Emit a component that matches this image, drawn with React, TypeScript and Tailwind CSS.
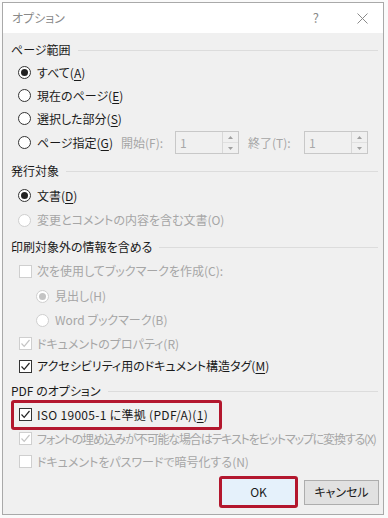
import React from "react";

const U = ({ c }: { c: string }) => <span className="underline underline-offset-2">{c}</span>;

function Radio({ checked, disabled }: { checked?: boolean; disabled?: boolean }) {
  return (
    <span
      className={`flex h-[13px] w-[13px] shrink-0 items-center justify-center rounded-full border bg-white ${
        disabled ? "border-[#cfcfcf]" : "border-[#333]"
      }`}
    >
      {checked && (
        <span className={`h-[7px] w-[7px] rounded-full ${disabled ? "bg-[#c4c4c4]" : "bg-[#222]"}`} />
      )}
    </span>
  );
}

function Check({ checked, disabled }: { checked?: boolean; disabled?: boolean }) {
  return (
    <span
      className={`flex h-[13px] w-[13px] shrink-0 items-center justify-center border bg-white ${
        disabled ? "border-[#cfcfcf]" : "border-[#333]"
      }`}
    >
      {checked && (
        <svg width="11" height="11" viewBox="0 0 11 11">
          <path
            d="M1.5 5.5 L4.2 8.3 L9.5 2"
            fill="none"
            stroke={disabled ? "#c4c4c4" : "#222"}
            strokeWidth="1.2"
          />
        </svg>
      )}
    </span>
  );
}

function Heading({ text }: { text: string }) {
  return (
    <div className="flex h-[22px] items-center pl-[8px] pr-[5px]">
      <span className="text-[#1a1a1a]">{text}</span>
      <span className="ml-[7px] h-px flex-1 bg-[#dcdcdc]" />
    </div>
  );
}

function Spin() {
  return (
    <div className="flex h-[23px] w-[64px] border border-[#c8c8c8] bg-[#f0f0f0]">
      <span className="flex-1 pl-[4px] leading-[21px] text-[#a8a8a8]">1</span>
      <div className="flex w-[16px] flex-col border-l border-[#d8d8d8]">
        <div className="flex flex-1 items-center justify-center">
          <svg width="5" height="3" viewBox="0 0 5 3"><path d="M0 3 L2.5 0 L5 3Z" fill="#a0a0a0" /></svg>
        </div>
        <div className="flex flex-1 items-center justify-center border-t border-[#e0e0e0]">
          <svg width="5" height="3" viewBox="0 0 5 3"><path d="M0 0 L2.5 3 L5 0Z" fill="#a0a0a0" /></svg>
        </div>
      </div>
    </div>
  );
}

export default function App() {
  const dis = "text-[#a6a6a6]";
  return (
    <div
      className="h-[518px] w-[388px] overflow-hidden bg-[#fafafa] pl-[2px] pt-[2px] text-[12px] text-[#1a1a1a] [font-feature-settings:'palt']"
      style={{ fontFamily: '"Noto Sans CJK JP", "Noto Sans", sans-serif' }}
    >
      <div className="flex h-[513px] w-[382px] flex-col border border-[#a9a9a9] bg-[#f0f0f0]">
        {/* Title bar */}
        <div className="flex h-[30px] shrink-0 items-center bg-white pl-[9px]">
          <span className="text-[#8a8a8a]">オプション</span>
          <span className="ml-auto mr-[38px] text-[13px] text-[#8a8a8a]">?</span>
          <svg className="mr-[15px]" width="11" height="11" viewBox="0 0 11 11">
            <path d="M0.5 0.5 L10.5 10.5 M10.5 0.5 L0.5 10.5" stroke="#8a8a8a" strokeWidth="1" />
          </svg>
        </div>

        <div className="flex flex-col pt-[6px]">
          <Heading text="ページ範囲" />
          <div className="flex h-[23px] items-center gap-[6px] pl-[15px]">
            <Radio checked />
            <span>すべて(<U c="A" />)</span>
          </div>
          <div className="flex h-[23px] items-center gap-[6px] pl-[15px]">
            <Radio />
            <span>現在のページ(<U c="E" />)</span>
          </div>
          <div className="flex h-[23px] items-center gap-[6px] pl-[15px]">
            <Radio />
            <span>選択した部分(<U c="S" />)</span>
          </div>
          <div className="flex h-[25px] items-center pl-[15px]">
            <Radio />
            <span className="ml-[6px] w-[84px]">ページ指定(<U c="G" />)</span>
            <span className={`${dis} w-[54px]`}>開始(F):</span>
            <Spin />
            <span className={`${dis} ml-[9px] w-[56px]`}>終了(T):</span>
            <Spin />
          </div>

          <div className="h-[5px]" />
          <Heading text="発行対象" />
          <div className="flex h-[27px] items-center gap-[6px] pl-[15px]">
            <Radio checked />
            <span>文書(<U c="D" />)</span>
          </div>
          <div className="flex h-[22px] items-center gap-[6px] pl-[15px]">
            <Radio disabled />
            <span className={dis}>変更とコメントの内容を含む文書(O)</span>
          </div>

          <div className="h-[5px]" />
          <Heading text="印刷対象外の情報を含める" />
          <div className="flex h-[26px] items-center gap-[5px] pl-[16px]">
            <Check disabled />
            <span className={dis}>次を使用してブックマークを作成(C):</span>
          </div>
          <div className="flex h-[24px] items-center gap-[6px] pl-[33px]">
            <Radio checked disabled />
            <span className={dis}>見出し(H)</span>
          </div>
          <div className="flex h-[24px] items-center gap-[6px] pl-[33px]">
            <Radio disabled />
            <span className={dis}>Word ブックマーク(B)</span>
          </div>
          <div className="flex h-[23px] items-center gap-[5px] pl-[16px]">
            <Check checked disabled />
            <span className={dis}>ドキュメントのプロパティ(R)</span>
          </div>
          <div className="flex h-[22px] items-center gap-[5px] pl-[16px]">
            <Check checked />
            <span>アクセシビリティ用のドキュメント構造タグ(<U c="M" />)</span>
          </div>

          <div className="h-[3px]" />
          <Heading text="PDF のオプション" />
          <div className="flex h-[25px] items-center pl-[8px]">
            <div className="flex h-[30px] w-[211px] items-center gap-[5px] rounded-[3px] border-[3px] border-[#b3172e] pl-[5px]">
              <Check checked />
              <span className="tracking-[0.3px]">ISO 19005-1 に準拠 (PDF/A)(<U c="1" />)</span>
            </div>
          </div>
          <div className="flex h-[23px] items-center gap-[5px] pl-[16px]">
            <Check checked disabled />
            <span className={`${dis} whitespace-nowrap tracking-[-1.15px]`}>
              フォントの埋め込みが不可能な場合はテキストをビットマップに変換する(X)
            </span>
          </div>
          <div className="flex h-[23px] items-center gap-[5px] pl-[16px]">
            <Check disabled />
            <span className={dis}>ドキュメントをパスワードで暗号化する(N)</span>
          </div>

          <div className="mt-[3px] flex items-center justify-end gap-[6px] pr-[4px]">
            <div className="flex h-[32px] w-[79px] items-center justify-center rounded-[3px] border-[3px] border-[#b3172e] bg-[#e5f1fb]">
              OK
            </div>
            <div className="flex h-[25px] w-[75px] items-center justify-center border border-[#adadad] bg-[#e1e1e1]">
              キャンセル
            </div>
          </div>
        </div>
      </div>
    </div>
  );
}
